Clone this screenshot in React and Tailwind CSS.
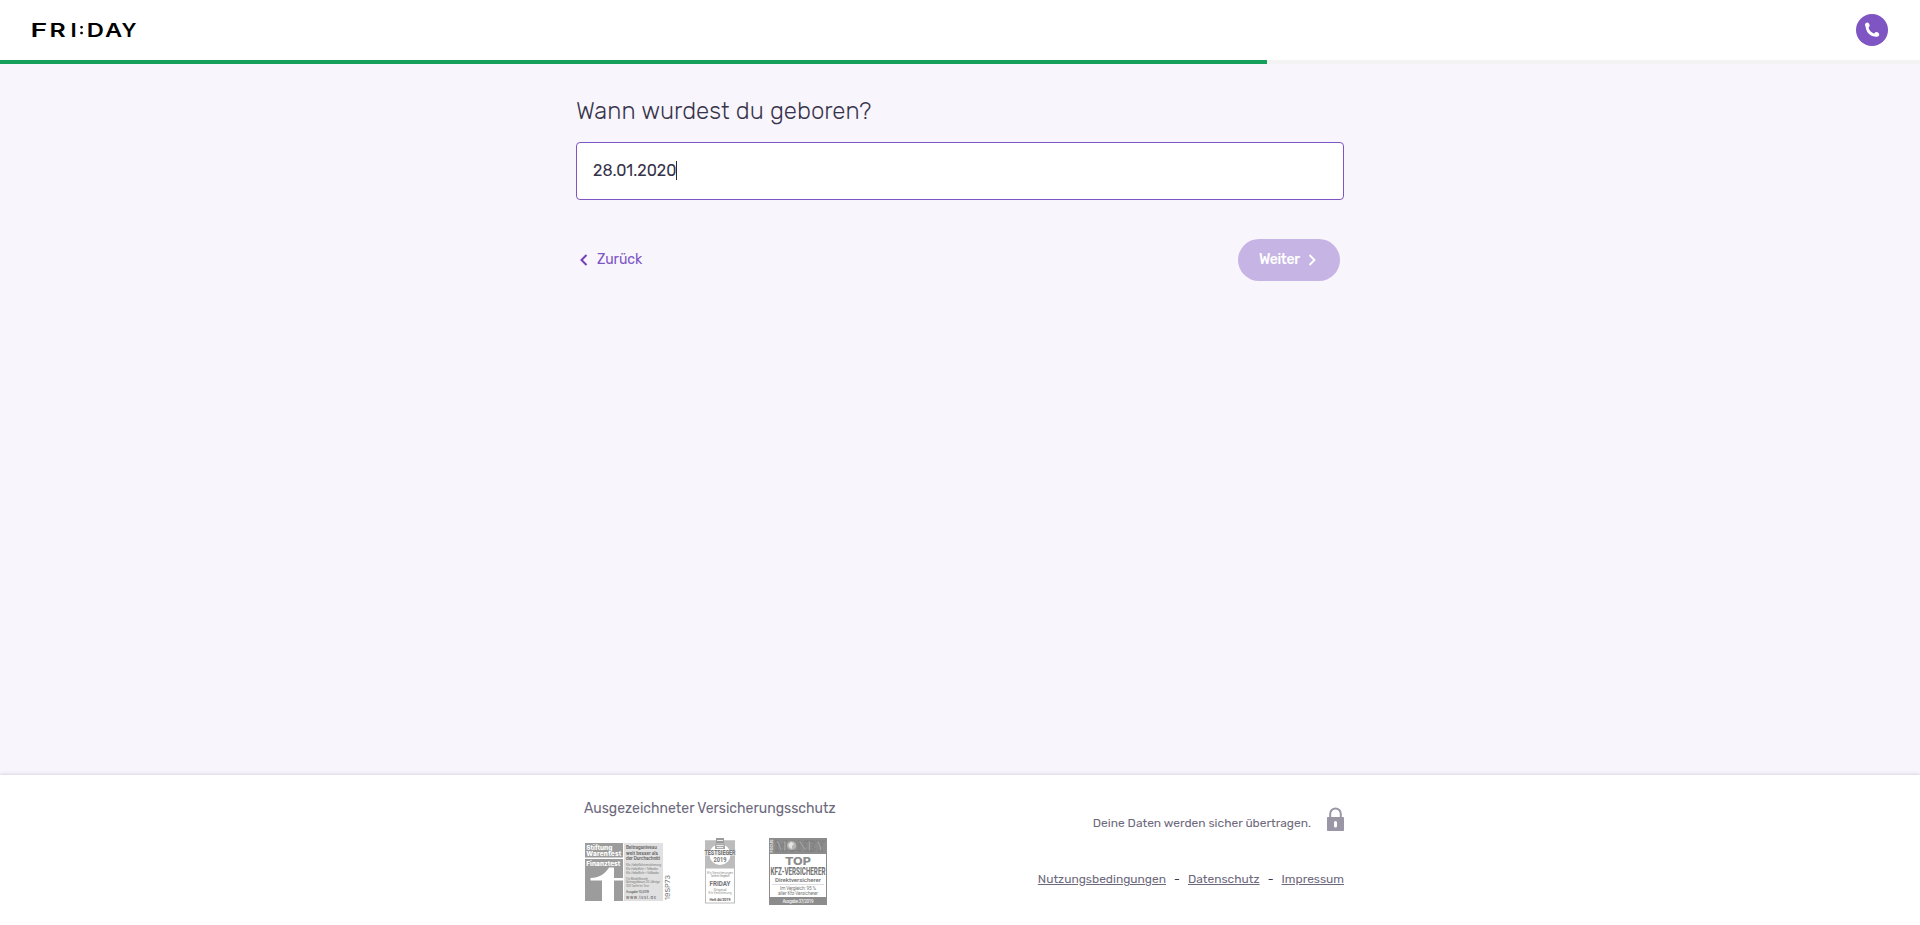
const SANS = "font-['Rubik','Roboto',sans-serif]";

function Letter({ x, w, children }) {
  return (
    <text x={x} y="15.5" textLength={w} lengthAdjust="spacingAndGlyphs">
      {children}
    </text>
  );
}

function Logo() {
  return (
    <svg width="108" height="18" viewBox="0 0 108 18" className="overflow-visible font-['Inter',sans-serif] text-[18.5px] font-semibold" fill="#000" role="img" aria-label="FRI:DAY">
      <Letter x="-1.6" w="16.8">F</Letter>
      <Letter x="17.6" w="16.2">R</Letter>
      <Letter x="38.4" w="6.2">I</Letter>
      <rect x="48.3" y="4.9" width="2.5" height="2.5" rx="0.8" />
      <rect x="48.3" y="10.8" width="2.5" height="2.5" rx="0.8" />
      <Letter x="54.8" w="17.2">D</Letter>
      <Letter x="73" w="17.2">A</Letter>
      <Letter x="89.6" w="15">Y</Letter>
    </svg>
  );
}

function FinanztestBadge() {
  return (
    <svg width="86" height="60" viewBox="0 0 86 60" className="overflow-visible font-['Inter',sans-serif]">
      <rect x="0" y="0" width="38" height="14.5" fill="#9c9c9c" />
      <rect x="0" y="16" width="38" height="42" fill="#9c9c9c" />
      <rect x="39" y="0" width="39" height="58" fill="#e0e0e0" />
      <g fill="#fff" fontWeight="800" fontSize="6.4">
        <text x="1.3" y="6.6" textLength="26">Stiftung</text>
        <text x="1.3" y="13.2" textLength="35">Warentest</text>
        <text x="1.3" y="22.8" textLength="34">Finanztest</text>
      </g>
      <path d="M24 24.500h5V35h10v2.500H29V58H17V37.500H5.500V35c9-.5 14-3.500 18.500-10.500z" fill="#fff" />
      <g fill="#686868" fontWeight="700" fontSize="4.3">
        <text x="41" y="6" textLength="31">Beitragsniveau</text>
        <text x="41" y="11.500" textLength="32">weit besser als</text>
        <text x="41" y="17" textLength="34">der Durchschnitt</text>
      </g>
      <g fill="#8a8a8a" fontWeight="500" fontSize="3">
        <text x="41" y="23.400" textLength="35">Kfz-Haftpflichtversicherung</text>
        <text x="41" y="27" textLength="32">Kfz-Haftpflicht + Teilkasko</text>
        <text x="41" y="30.600" textLength="33">Kfz-Haftpflicht + Vollkasko</text>
        <text x="41" y="36.800" textLength="22">Für Modellkunde</text>
        <text x="41" y="40.400" textLength="34">Beitragsklasse 20-Jährige</text>
        <text x="41" y="44" textLength="23">100 Tarife im Test</text>
        <text x="41" y="50.400" textLength="23" fill="#555">Ausgabe 10/2019</text>
        <text x="41" y="56" fontSize="4" textLength="30" fill="#666">www.test.de</text>
      </g>
      <text transform="translate(84.500 57) rotate(-90)" fontSize="6.600" textLength="25" lengthAdjust="spacingAndGlyphs" fill="#6a6a6a">19SP73</text>
    </svg>
  );
}

function TestsiegerBadge() {
  return (
    <svg width="32" height="66" viewBox="0 0 32 66" className="overflow-visible font-['Roboto',sans-serif]" textAnchor="middle">
      <rect x="1.500" y="3" width="29" height="62" fill="#fff" stroke="#bcbcbc" />
      <rect x="1" y="2.500" width="30" height="28" fill="#bcbcbc" />
      <circle cx="16" cy="16.500" r="10.500" fill="#fff" />
      <rect x="12" y="0" width="8" height="5" fill="#9b9b9b" />
      <rect x="11" y="5.500" width="10" height="5.500" fill="#ababab" />
      <path d="M13 2.500h6M12.500 7.500h7M13 9.500h6" stroke="#eee" />
      <rect x="0.500" y="12" width="31" height="5.500" fill="#eee" />
      <text x="16" y="17.200" fontSize="6.800" fontWeight="800" textLength="31" lengthAdjust="spacingAndGlyphs" fill="#777">TESTSIEGER</text>
      <text x="16" y="23.800" fontSize="6.800" fontWeight="700" textLength="13" lengthAdjust="spacingAndGlyphs" fill="#777">2019</text>
      <g fill="#8c8c8c" fontSize="2.800">
        <text x="16" y="36" textLength="26">Kfz-Versicherungen</text>
        <text x="16" y="39.200" textLength="19">Tarife im Vergleich</text>
        <text x="16" y="52.500" fontSize="4" textLength="13">Original</text>
        <text x="16" y="56.300" textLength="23">Kfz-Versicherung</text>
      </g>
      <text x="16" y="48" fontSize="7" fontWeight="700" textLength="21" lengthAdjust="spacingAndGlyphs" fill="#727272">FRIDAY</text>
      <text x="16" y="62.500" fontSize="4" fontWeight="700" textLength="21" fill="#666">Heft 46/2019</text>
    </svg>
  );
}

function MoneyBadge() {
  return (
    <svg width="58" height="68" viewBox="0 0 58 68" className="overflow-visible font-['Roboto',sans-serif]" textAnchor="middle">
      <rect width="58" height="67" fill="#8c8c8c" />
      <rect x="1" y="16" width="56" height="43" fill="#fff" />
      <text transform="translate(4 8) rotate(-90)" fontSize="4" fontWeight="700" textLength="13" fill="#eee">FOCUS</text>
      <text x="31" y="13" className="font-['Liberation_Serif',serif]" fontSize="15" fontWeight="700" textLength="50" lengthAdjust="spacingAndGlyphs" fill="#a8a8a8" stroke="#717171" strokeWidth="0.500">MONEY</text>
      <circle cx="22.500" cy="7.500" r="4.500" fill="#b5b5b5" />
      <path d="M19.500 6l3-2 2.500 2-2 2v3l-3-2z" fill="#e5e5e5" />
      <text x="29" y="26.800" className="font-['Inter',sans-serif]" fontSize="10.600" fontWeight="800" textLength="26" lengthAdjust="spacingAndGlyphs" fill="#8b8b8b">TOP</text>
      <text x="29" y="37" fontSize="10.800" fontWeight="800" textLength="55" lengthAdjust="spacingAndGlyphs" fill="#777">KFZ-VERSICHERER</text>
      <text x="29" y="44.200" fontSize="6.200" fontWeight="500" textLength="46" fill="#707070">Direktversicherer</text>
      <path d="M3 46.500h52" stroke="#cfcfcf" strokeWidth="0.700" />
      <text x="29" y="52" fontSize="4.800" textLength="36" fill="#777">Im Vergleich: 95 %</text>
      <text x="29" y="57.200" fontSize="4.800" textLength="40" fill="#777">aller Kfz-Versicherer</text>
      <text x="29" y="65" fontSize="4.600" fontWeight="500" textLength="31" fill="#eee">Ausgabe 37/2019</text>
    </svg>
  );
}

function Lock() {
  return (
    <svg width="17" height="25" viewBox="0 0 17 25" fill="none">
      <path d="M3.200 11V6.800a5.300 5.300 0 0 1 10.600 0V11" stroke="#9a96a6" strokeWidth="2" />
      <path fillRule="evenodd" d="M.7 10h15.600q.7 0 .7.700v12.600q0 .700-.7.700H.7q-.7 0-.7-.7V10.700Q0 10 .7 10zM7 15.500v3.500a1.500 1.500 0 0 0 3 0v-3.500a1.500 1.500 0 0 0-3 0z" fill="#9a96a6" />
    </svg>
  );
}

export default function App() {
  return (
    <div className={`${SANS} flex h-[925px] w-full flex-col overflow-hidden bg-[#f8f5fc] text-[#36334a]`}>
      <header className="flex h-[60px] shrink-0 items-center justify-between bg-white pr-8 pl-8">
        <Logo />
        <button className="flex size-8 items-center justify-center rounded-full bg-[#7e55c3]" aria-label="Telefon">
          <svg width="16" height="16" viewBox="0 0 16 16">
            <path d="M3.200 3 C2.400 9 7 13.400 13.200 13.200" fill="none" stroke="#fff" strokeWidth="2.900" />
            <ellipse cx="3.300" cy="3" rx="2.200" ry="2.500" transform="rotate(-20 3.300 3)" fill="#fff" />
            <ellipse cx="12.800" cy="12.300" rx="2.500" ry="2.200" transform="rotate(20 12.800 12.300)" fill="#fff" />
          </svg>
        </button>
      </header>
      <div className="h-1 shrink-0 bg-[#f3f3f3]">
        <div className="h-full w-[1267px] bg-[#14a05a]" />
      </div>

      <main className="mx-auto w-[768px] flex-1 pt-[31px]">
        <h1 className="h-8 text-2xl leading-8 font-light whitespace-nowrap">Wann wurdest du geboren?</h1>
        <div className="mt-[15px] flex h-[58px] items-center rounded border border-[#7e55c3] bg-white pb-px pl-4">
          <span className="text-base leading-6">28.01.2020</span>
          <span className="h-[19px] w-px bg-[#2b2838]" />
        </div>
        <div className="mt-[39px] flex h-[42px] items-center justify-between pr-1 pl-1">
          <button className="flex items-center gap-[9px] pb-px text-sm leading-5 text-[#7e55c3]">
            <svg width="8" height="12" viewBox="0 0 8 12" fill="none" stroke="#7440b8" strokeWidth="2">
              <path d="M6.500 1L1.500 6l5 5" />
            </svg>
            <span>Zurück</span>
          </button>
          <button className="flex h-[42px] w-[102px] items-center gap-2 rounded-full bg-[#c6b5e4] pb-px pl-[21px] text-sm leading-5 font-medium text-white">
            <span className="tracking-[-0.35px]">Weiter</span>
            <svg width="8" height="12" viewBox="0 0 8 12" fill="none" stroke="#fff" strokeWidth="1.800">
              <path d="M1.500 1l5 5-5 5" />
            </svg>
          </button>
        </div>
      </main>

      <footer className="h-[150px] shrink-0 bg-white text-[#6d697c] shadow-[0_0_4px_rgba(60,50,90,0.25)]">
        <div className="mx-auto flex w-[768px] justify-between">
          <div className="pt-[22px] pl-2">
            <h2 className="h-6 text-sm leading-6 whitespace-nowrap">Ausgezeichneter Versicherungsschutz</h2>
            <div className="mt-[17px] flex items-start pl-px">
              <div className="mt-[5px] mr-[33px]"><FinanztestBadge /></div>
              <div className="mr-[33px]"><TestsiegerBadge /></div>
              <MoneyBadge />
            </div>
          </div>
          <div className="flex flex-col items-end pt-8 text-xs leading-5">
            <div className="flex h-[25px] items-start gap-4">
              <span className="pt-[6px] whitespace-nowrap">Deine Daten werden sicher übertragen.</span>
              <Lock />
            </div>
            <nav className="mt-[37px] flex h-5 items-center whitespace-nowrap">
              <a className="underline">Nutzungsbedingungen</a>
              <span className="w-[22px] text-center text-[#3b384a]">-</span>
              <a className="underline">Datenschutz</a>
              <span className="w-[22px] text-center text-[#3b384a]">-</span>
              <a className="underline">Impressum</a>
            </nav>
          </div>
        </div>
      </footer>
    </div>
  );
}
